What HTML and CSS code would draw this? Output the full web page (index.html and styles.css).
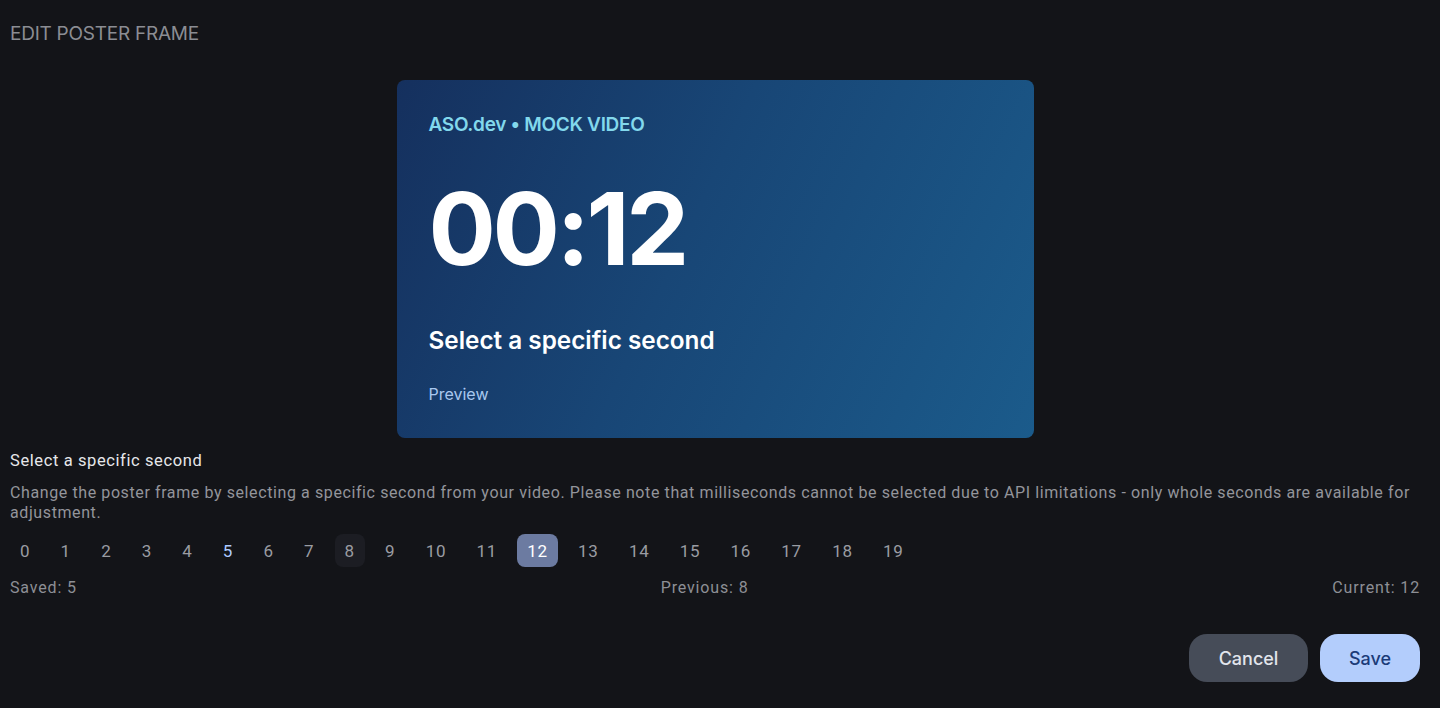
FILE: index.html
```html
<!DOCTYPE html>
<html lang="en">
<head>
<meta charset="utf-8">
<title>Edit poster frame</title>
<link rel="stylesheet" href="styles.css">
</head>
<body>
<div class="page">
  <h1 class="title">EDIT POSTER FRAME</h1>
  <div class="card">
    <div class="card-tag">ASO.dev • MOCK VIDEO</div>
    <div class="card-time">00:12</div>
    <div class="card-heading">Select a specific second</div>
    <div class="card-preview">Preview</div>
  </div>
  <div class="label">Select a specific second</div>
  <p class="desc">Change the poster frame by selecting a specific second from your video. Please note that milliseconds cannot be selected due to API limitations - only whole seconds are available for adjustment.</p>
  <div class="seconds">
    <button class="sec">0</button>
    <button class="sec">1</button>
    <button class="sec">2</button>
    <button class="sec">3</button>
    <button class="sec">4</button>
    <button class="sec saved">5</button>
    <button class="sec">6</button>
    <button class="sec">7</button>
    <button class="sec previous">8</button>
    <button class="sec">9</button>
    <button class="sec">10</button>
    <button class="sec">11</button>
    <button class="sec current">12</button>
    <button class="sec">13</button>
    <button class="sec">14</button>
    <button class="sec">15</button>
    <button class="sec">16</button>
    <button class="sec">17</button>
    <button class="sec">18</button>
    <button class="sec">19</button>
  </div>
  <div class="stats">
    <span>Saved: 5</span>
    <span>Previous: 8</span>
    <span>Current: 12</span>
  </div>
  <div class="actions">
    <button class="btn btn-cancel">Cancel</button>
    <button class="btn btn-save">Save</button>
  </div>
</div>
</body>
</html>
```

FILE: styles.css
```css
html, body {
  margin: 0;
  padding: 0;
  background: #131418;
  height: 100%;
}
body {
  font-family: Roboto, "Liberation Sans", sans-serif;
  color: #9a9ca2;
}
.page {
  display: flex;
  flex-direction: column;
  padding: 22px 20px 0 10px;
}
.title {
  margin: 0;
  font-family: Inter, "Liberation Sans", sans-serif;
  font-weight: 400;
  font-size: 19px;
  line-height: 24px;
  color: #8b8d93;
  letter-spacing: -0.25px;
}
.card {
  align-self: center;
  margin-top: 34px;
  width: 637px;
  box-sizing: border-box;
  height: 358px;
  padding: 33px 32px;
  border-radius: 8px;
  background: linear-gradient(115deg, #15305e 0%, #184676 45%, #1b5b8b 100%);
  display: flex;
  flex-direction: column;
  font-family: Inter, "Liberation Sans", sans-serif;
}
.card-tag {
  font-size: 19px;
  line-height: 24px;
  font-weight: 600;
  color: #82d8ec;
  letter-spacing: -0.3px;
}
.card-time {
  margin-top: 42px;
  font-size: 100px;
  line-height: 100px;
  font-weight: 700;
  color: #ffffff;
  letter-spacing: -3.4px;
}
.card-heading {
  margin-top: 45px;
  font-size: 24.3px;
  line-height: 32px;
  font-weight: 600;
  color: #ffffff;
  letter-spacing: 0;
}
.card-preview {
  margin-top: 27px;
  font-size: 16px;
  line-height: 22px;
  color: #a9c8ef;
}
.label {
  margin-top: 12px;
  font-size: 16.5px;
  line-height: 22px;
  color: #e6e7ea;
  letter-spacing: 0.6px;
}
.desc {
  margin: 11px 0 0;
  font-size: 16px;
  line-height: 20px;
  color: #93959b;
  letter-spacing: 0.6px;
}
.seconds {
  margin-top: 11px;
  display: flex;
  gap: 10.3px;
}
.sec {
  height: 33px;
  padding: 0 10px;
  min-width: 30px;
  border: 0;
  border-radius: 8px;
  background: transparent;
  font-family: Roboto, "Liberation Sans", sans-serif;
  font-size: 17px;
  letter-spacing: 0.7px;
  color: #9a9ca2;
  cursor: pointer;
}
.sec.saved {
  color: #aecbff;
}
.sec.previous {
  background: #1c1d23;
}
.sec.current {
  background: #6c7ba1;
  color: #ffffff;
}
.stats {
  margin-top: 11px;
  display: flex;
  justify-content: space-between;
  font-size: 16px;
  line-height: 20px;
  color: #8d8f95;
  letter-spacing: 0.85px;
}
.actions {
  margin-top: 36px;
  display: flex;
  justify-content: flex-end;
  gap: 12px;
}
.btn {
  height: 48px;
  border: 0;
  border-radius: 18px;
  font-family: Inter, "Liberation Sans", sans-serif;
  font-size: 18px;
  font-weight: 500;
  cursor: pointer;
}
.btn-cancel {
  width: 119px;
  background: #464c58;
  color: #e2e5ec;
}
.btn-save {
  width: 100px;
  background: #b3cdfc;
  color: #1b3b78;
}
```
